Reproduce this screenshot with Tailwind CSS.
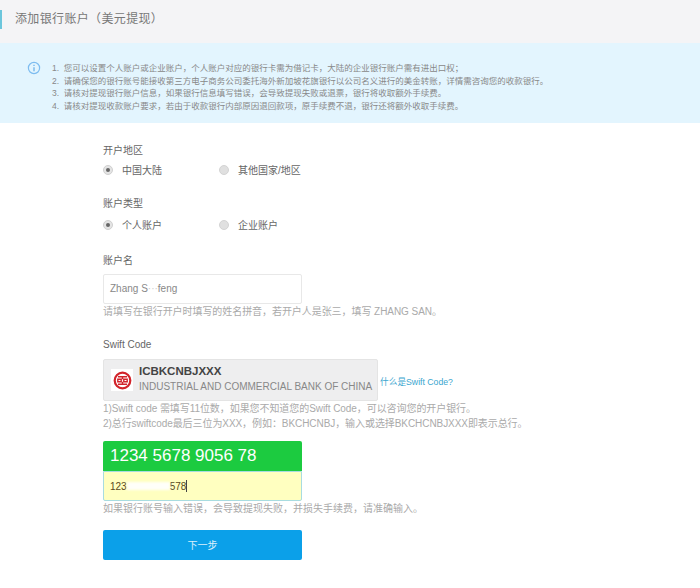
<!DOCTYPE html>
<html lang="zh-CN">
<head>
    <meta charset="UTF-8">
    <title>添加银行账户</title>
    <script src="https://cdn.jsdelivr.net/npm/@tailwindcss/browser@4"></script>
</head>
<body class="bg-white w-[700px] h-[588px] overflow-hidden font-['Liberation_Sans','Noto_Sans_CJK_SC',sans-serif] text-[#666]">

    <!-- Title bar -->
    <div class="bg-[#f4f4f6] h-[43px] pt-[10px]">
        <div class="border-l-2 border-[#6cc6dc] h-[19px] pl-[13px] text-[12px] leading-[19px] tracking-[0.35px] text-[#777]">添加银行账户（美元提现）</div>
    </div>

    <!-- Notice -->
    <div class="bg-[#e3f5fe] h-[80px] pt-[18px] pl-[27px] flex text-[8.5px] leading-[12.6px] text-[#888]">
        <svg class="w-[14px] h-[14px] shrink-0" viewBox="0 0 14 14" fill="none">
            <circle cx="7" cy="7" r="5.6" stroke="#7dbcf0" stroke-width="1.2"/>
            <path d="M7 6.2v4" stroke="#6fb2ea" stroke-width="1.3"/>
            <path d="M7 3.7v1.3" stroke="#6fb2ea" stroke-width="1.3"/>
        </svg>
        <ol class="ml-[11px] mt-[1px] whitespace-nowrap">
            <li>1.&nbsp; 您可以设置个人账户或企业账户，个人账户对应的银行卡需为借记卡，大陆的企业银行账户需有进出口权；</li>
            <li>2.&nbsp; 请确保您的银行账号能接收第三方电子商务公司委托海外新加坡花旗银行以公司名义进行的美金转账，详情需咨询您的收款银行。</li>
            <li>3.&nbsp; 请核对提现银行账户信息，如果银行信息填写错误，会导致提现失败或退票，银行将收取额外手续费。</li>
            <li>4.&nbsp; 请核对提现收款账户要求，若由于收款银行内部原因退回款项，原手续费不退，银行还将额外收取手续费。</li>
        </ol>
    </div>

    <!-- Form -->
    <div class="pl-[103px] pt-[19px] text-[10px]">
        <div class="leading-[14px] pt-[2px]">开户地区</div>
        <div class="flex items-center mt-[5px] h-[14px]">
            <span class="w-[10px] h-[10px] rounded-full bg-[#e4e4e4] border border-[#d0d0d0] flex items-center justify-center"><span class="w-[4px] h-[4px] rounded-full bg-[#666]"></span></span>
            <span class="ml-[9px] w-[97px]">中国大陆</span>
            <span class="w-[10px] h-[10px] rounded-full bg-[#e0e0e0] border border-[#d4d4d4]"></span>
            <span class="ml-[9px]">其他国家/地区</span>
        </div>

        <div class="leading-[14px] mt-[20px]">账户类型</div>
        <div class="flex items-center mt-[7px] h-[14px]">
            <span class="w-[10px] h-[10px] rounded-full bg-[#e4e4e4] border border-[#d0d0d0] flex items-center justify-center"><span class="w-[4px] h-[4px] rounded-full bg-[#666]"></span></span>
            <span class="ml-[9px] w-[97px]">个人账户</span>
            <span class="w-[10px] h-[10px] rounded-full bg-[#e0e0e0] border border-[#d4d4d4]"></span>
            <span class="ml-[9px]">企业账户</span>
        </div>

        <div class="leading-[14px] mt-[22px]">账户名</div>
        <div class="w-[199px] h-[30px] mt-[6px] border border-[#e8e8e8] rounded-[2px] pl-[6px] text-[10px] leading-[28px] text-[#888]">Zhang S<span class="text-[#ccc]">···</span>feng</div>
        <div class="text-[#aaa] leading-[14px] mt-[1px] tracking-[-0.06px] whitespace-nowrap">请填写在银行开户时填写的姓名拼音，若开户人是张三，填写 ZHANG SAN。</div>

        <div class="leading-[14px] mt-[19px]">Swift Code</div>
        <div class="flex items-end mt-[7px]">
            <div class="w-[275px] h-[42px] bg-[#eeeeef] border border-[#e4e4e4] rounded-[2px] flex items-center pl-[7px]">
                <div class="w-[22px] h-[22px] bg-white flex items-center justify-center shrink-0">
                    <svg class="w-[19px] h-[19px]" viewBox="0 0 19 19" fill="none" stroke="#d2232a">
                        <circle cx="9.5" cy="9.5" r="7.8" stroke-width="2.2"/>
                        <path d="M5 5.8h9M5 13.2h9M9.5 5.8v2.4M9.5 10.8v2.4M4.8 8.2h3.4v2.6H4.8zM10.8 8.2h3.4v2.6h-3.4z" stroke-width="1.4"/>
                    </svg>
                </div>
                <div class="ml-[6px] pb-[2px] whitespace-nowrap">
                    <div class="text-[11.5px] leading-[15px] font-bold text-[#444]">ICBKCNBJXXX</div>
                    <div class="text-[10px] leading-[15px] text-[#888]">INDUSTRIAL AND COMMERCIAL BANK OF CHINA</div>
                </div>
            </div>
            <a class="ml-[2px] mb-[13px] text-[8.7px] leading-[12px] text-[#3aa6cf] whitespace-nowrap">什么是Swift Code?</a>
        </div>
        <div class="text-[#aaa] leading-[15px] tracking-[-0.07px] whitespace-nowrap">
            <div>1)Swift code 需填写11位数，如果您不知道您的Swift Code，可以咨询您的开户银行。</div>
            <div>2)总行swiftcode最后三位为XXX，例如：BKCHCNBJ，输入或选择BKCHCNBJXXX即表示总行。</div>
        </div>

        <div class="w-[199px] mt-[10px] h-[30px] bg-[#1ccb40] rounded-t-[2px] pl-[7px] text-white text-[17px] leading-[30px]">1234 5678 9056 78</div>
        <div class="w-[199px] h-[30px] bg-[#ffffc0] border border-[#a8dce0] rounded-b-[2px] pl-[6px] text-[10px] text-[#5a4a20] flex items-center">
            <span>123</span><span class="w-[43px] h-[8px] bg-white/90 blur-[1px]"></span><span>578</span><span class="w-px h-[12px] bg-[#444]"></span>
        </div>
        <div class="text-[#aaa] leading-[14px] mt-[1px] whitespace-nowrap">如果银行账号输入错误，会导致提现失败，并损失手续费，请准确输入。</div>

        <button class="block w-[199px] h-[30px] mt-[14px] bg-[#0ba0e9] rounded-[2px] text-white/85 text-[10px]">下一步</button>
    </div>
</body>
</html>
